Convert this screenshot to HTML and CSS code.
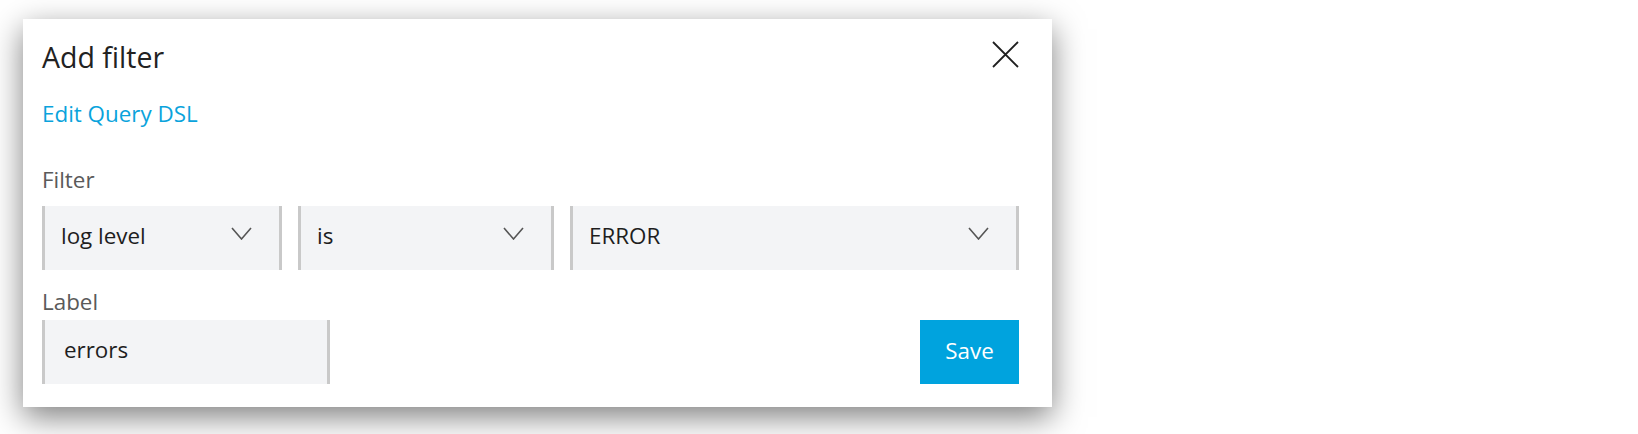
FILE: index.html
```html
<!DOCTYPE html>
<html>
<head>
<meta charset="utf-8">
<link rel="stylesheet" href="styles.css">
</head>
<body>
<div class="stage">
  <div class="dialog">
    <div class="header">
      <h1 class="title">Add filter</h1>
      <button class="close" aria-label="Close">
        <svg width="27" height="27" viewBox="0 0 27 27"><path d="M1 1L26 26M26 1L1 26" stroke="#1f1f1f" stroke-width="1.8" fill="none"/></svg>
      </button>
    </div>
    <a class="dsl" href="#">Edit Query DSL</a>
    <div class="field-label filter-label">Filter</div>
    <div class="selects">
      <div class="select"><span>log level</span><svg class="chev" width="21" height="13" viewBox="0 0 21 13"><path d="M1 1L10.5 12L20 1" stroke="#555" stroke-width="1.6" fill="none"/></svg></div>
      <div class="select"><span>is</span><svg class="chev" width="21" height="13" viewBox="0 0 21 13"><path d="M1 1L10.5 12L20 1" stroke="#555" stroke-width="1.6" fill="none"/></svg></div>
      <div class="select"><span>ERROR</span><svg class="chev" width="21" height="13" viewBox="0 0 21 13"><path d="M1 1L10.5 12L20 1" stroke="#555" stroke-width="1.6" fill="none"/></svg></div>
    </div>
    <div class="field-label label-label">Label</div>
    <div class="bottom">
      <div class="input"><span>errors</span></div>
      <button class="save">Save</button>
    </div>
  </div>
</div>
</body>
</html>
```

FILE: styles.css
```css
html, body {
  margin: 0;
  padding: 0;
  background: #ffffff;
}
body {
  font-family: "Open Sans", "Noto Sans", sans-serif;
  color: #222222;
  height: 434px;
  overflow: hidden;
}
.stage {
  padding: 19px 0 0 23px;
}
.dialog {
  width: 1029px;
  height: 388px;
  box-sizing: border-box;
  background: #ffffff;
  padding: 19px 33px 0 19px;
  box-shadow: 0 10px 30px rgba(0, 0, 0, 0.5);
  display: flex;
  flex-direction: column;
}
.header {
  display: flex;
  justify-content: space-between;
  align-items: flex-start;
}
.title {
  margin: 0;
  font-size: 28.5px;
  font-weight: 400;
  line-height: 38px;
  color: #222222;
}
.close {
  margin: 3px 0 0 0;
  padding: 0;
  border: 0;
  background: transparent;
  width: 27px;
  height: 27px;
  display: block;
}
.close svg { display: block; }
.dsl {
  margin-top: 23px;
  font-size: 22.4px;
  line-height: 30px;
  color: #0aa3dc;
  text-decoration: none;
  align-self: flex-start;
}
.field-label {
  font-size: 22.4px;
  line-height: 30px;
  color: #5a5a5a;
}
.filter-label {
  margin-top: 36px;
}
.selects {
  margin-top: 11px;
  display: grid;
  grid-template-columns: 240px 256px 1fr;
  gap: 16px;
}
.select {
  height: 64px;
  box-sizing: border-box;
  background: #f3f4f6;
  border-left: 3px solid #c9c9c9;
  border-right: 3px solid #c9c9c9;
  display: flex;
  align-items: center;
  justify-content: space-between;
  padding: 0 27px 0 16px;
  font-size: 22.4px;
  line-height: 30px;
  color: #1e1e1e;
}
.select span { margin-top: -5px; }
.chev {
  display: block;
  margin-top: -10px;
}
.label-label {
  margin-top: 17px;
}
.bottom {
  margin-top: 3px;
  display: flex;
  justify-content: space-between;
  align-items: flex-start;
}
.input {
  width: 288px;
  height: 64px;
  box-sizing: border-box;
  background: #f3f4f6;
  border-left: 3px solid #c9c9c9;
  border-right: 3px solid #c9c9c9;
  display: flex;
  align-items: center;
  padding: 0 19px;
  font-size: 22.4px;
  line-height: 30px;
  color: #1e1e1e;
}
.input span { margin-top: -5px; }
.save {
  width: 99px;
  height: 64px;
  border: 0;
  margin: 0;
  padding: 0 0 3px 0;
  background: #00a3de;
  color: #ffffff;
  font-family: "Open Sans", "Noto Sans", sans-serif;
  font-size: 22.4px;
  line-height: 30px;
}
```
